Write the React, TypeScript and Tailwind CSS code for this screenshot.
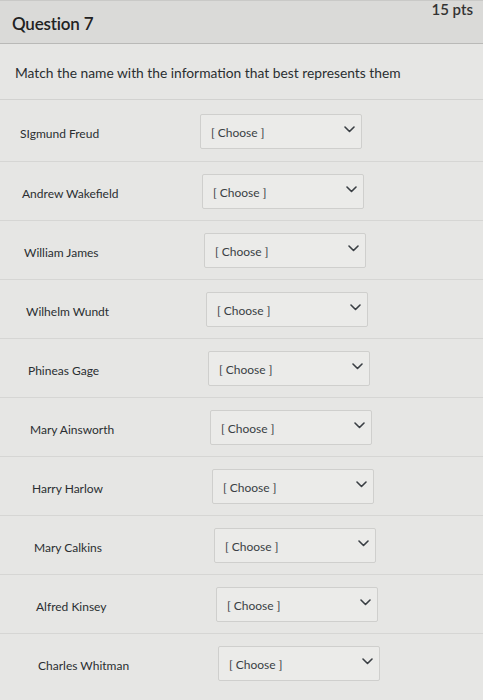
const rows = [
  { name: "SIgmund Freud", shift: 0 },
  { name: "Andrew Wakefield", shift: 2 },
  { name: "William James", shift: 4 },
  { name: "Wilhelm Wundt", shift: 6 },
  { name: "Phineas Gage", shift: 8 },
  { name: "Mary Ainsworth", shift: 10 },
  { name: "Harry Harlow", shift: 12 },
  { name: "Mary Calkins", shift: 14 },
  { name: "Alfred Kinsey", shift: 16 },
  { name: "Charles Whitman", shift: 18 },
]

function Chevron() {
  return (
    <svg width="11" height="7" viewBox="0 0 11 7" className="text-[#3a3f44]">
      <path d="M1 1l4.5 4.5L10 1" fill="none" stroke="currentColor" strokeWidth="1.6" strokeLinecap="round" strokeLinejoin="round" />
    </svg>
  )
}

export default function App() {
  return (
    <div
      className="w-[483px] h-[700px] overflow-hidden bg-[#e6e6e4] text-[#2f3437]"
      style={{ fontFamily: "Lato, 'Open Sans', sans-serif" }}
    >
      {/* Header */}
      <div className="h-[44px] bg-[#dadad8] border-t border-[#c9c9c7] border-b border-b-[#b9b9b7] flex items-start justify-between pl-3 pr-[10px]">
        <div className="pt-[10px] text-[17px] font-semibold text-[#222] tracking-[-0.2px]">Question 7</div>
        <div className="-mt-[2px] text-[15px] leading-[20px] font-semibold text-[#333]">15 pts</div>
      </div>

      {/* Question text */}
      <div className="h-[56px] border-b border-[#d2d2d0] pl-[15px] pt-[19px] text-[13.8px] text-[#2a2e31]">
        Match the name with the information that best represents them
      </div>

      {/* Answers */}
      <div className="pt-[2px]">
        {rows.map((r, i) => (
          <div
            key={r.name}
            className={`h-[59px] flex items-center ${i > 0 ? "border-t border-[#d6d6d4]" : ""}`}
            style={{ paddingLeft: 20 + r.shift }}
          >
            <div className="w-[180px] mt-[5px] text-[12px] text-[#2a2e31]">{r.name}</div>
            <div className="w-[162px] h-[35px] border border-[#cfcfcd] bg-[#ebebe9] rounded-[2px] flex items-start justify-between pl-[10px] pr-[6px]">
              <span className="mt-[9px] text-[12px] text-[#3a3f44]">[ Choose ]</span>
              <span className="mt-[11px]"><Chevron /></span>
            </div>
          </div>
        ))}
      </div>
    </div>
  )
}
